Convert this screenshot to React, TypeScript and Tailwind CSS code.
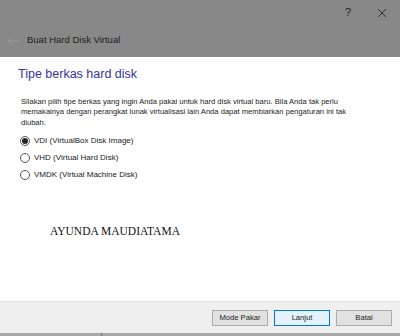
export default function App() {
  const options = [
    { label: 'VDI (VirtualBox Disk Image)', checked: true },
    { label: 'VHD (Virtual Hard Disk)', checked: false },
    { label: 'VMDK (Virtual Machine Disk)', checked: false },
  ]

  return (
    <div className="w-[400px] h-[336px] flex flex-col bg-white overflow-hidden" style={{ fontFamily: '"Liberation Sans", Arial, sans-serif' }}>
      {/* header */}
      <div className="h-[57px] bg-[#888888] flex flex-col shrink-0">
        <div className="h-[25px] flex items-center justify-end pr-[13px] gap-[26px] text-[#222] text-[11px]">
          <span>?</span>
          <svg width="10" height="10" viewBox="0 0 10 10" className="stroke-[#333]">
            <path d="M1 1L9 9M9 1L1 9" strokeWidth="1" />
          </svg>
        </div>
        <div className="flex items-center h-[32px] pl-[6px] pb-[1px]">
          <svg width="14" height="10" viewBox="0 0 14 10" className="stroke-[#9a9a9a] fill-none">
            <path d="M13 5H2M6 1L2 5L6 9" strokeWidth="1" />
          </svg>
          <span className="ml-[7px] text-[9.5px] text-[#1e1e1e]">Buat Hard Disk Virtual</span>
        </div>
      </div>

      {/* body */}
      <div className="flex-1 flex flex-col">
        <h1 className="mt-[9px] ml-[18px] text-[12.5px] text-[#3434a4] leading-[16px]">Tipe berkas hard disk</h1>
        <p className="mt-[15px] ml-[21px] mr-[30px] text-[7.6px] leading-[10.3px] text-[#222]">
          Silakan pilih tipe berkas yang ingin Anda pakai untuk hard disk virtual baru. Bila Anda tak perlu memakainya dengan perangkat lunak virtualisasi lain Anda dapat membiarkan pengaturan ini tak diubah.
        </p>
        <div className="mt-[8px] ml-[20px] flex flex-col gap-[6px]">
          {options.map((o) => (
            <div key={o.label} className="flex items-center h-[11px]">
              <span className="w-[10px] h-[10px] rounded-full border border-[#555] flex items-center justify-center">
                {o.checked && <span className="w-[6px] h-[6px] rounded-full bg-[#222]" />}
              </span>
              <span className="ml-[4px] text-[8px] text-[#222]">{o.label}</span>
            </div>
          ))}
        </div>
        <div className="mt-[42px] ml-[50px] text-[11.5px] text-[#111]" style={{ fontFamily: '"Liberation Serif", "Times New Roman", serif' }}>
          AYUNDA MAUDIATAMA
        </div>
      </div>

      {/* footer */}
      <div className="h-[32px] bg-[#efefef] border-t border-[#e3e3e3] flex items-center justify-end gap-[6px] pr-[8px] shrink-0">
        <button className="w-[56px] h-[16px] bg-[#e1e1e1] border border-[#adadad] text-[7.6px] text-[#222]">Mode Pakar</button>
        <button className="w-[56px] h-[16px] bg-[#e5f1fb] border border-[#0078d7] text-[7.6px] text-[#222]">Lanjut</button>
        <button className="w-[56px] h-[16px] bg-[#e1e1e1] border border-[#adadad] text-[7.6px] text-[#222]">Batal</button>
      </div>
      <div className="h-[3px] bg-[#a8a8a8] flex shrink-0">
        <div className="w-[102px] border-r border-[#777]" />
      </div>
    </div>
  )
}
